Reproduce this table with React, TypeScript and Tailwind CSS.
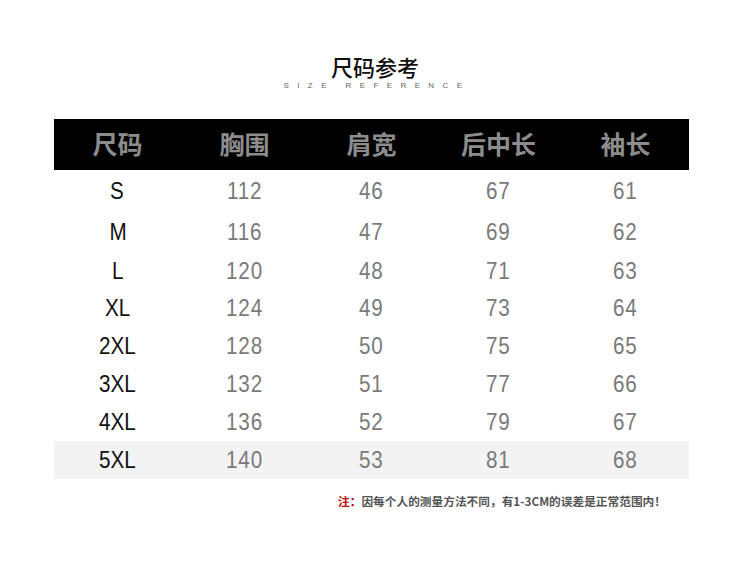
const headers = ["尺码", "胸围", "肩宽", "后中长", "袖长"];

const rows = [
  { size: "S", v: ["112", "46", "67", "61"], h: "h-[42px]" },
  { size: "M", v: ["116", "47", "69", "62"], h: "h-[40px]" },
  { size: "L", v: ["120", "48", "71", "63"], h: "h-[37px]" },
  { size: "XL", v: ["124", "49", "73", "64"], h: "h-[38px]" },
  { size: "2XL", v: ["128", "50", "75", "65"], h: "h-[38px]" },
  { size: "3XL", v: ["132", "51", "77", "66"], h: "h-[38px]" },
  { size: "4XL", v: ["136", "52", "79", "67"], h: "h-[38px]" },
  { size: "5XL", v: ["140", "53", "81", "68"], h: "h-[38px]", shade: true },
];

const cjk = "font-['Noto_Sans_CJK_SC',sans-serif]";
const num = "font-['Liberation_Sans',sans-serif]";

export default function App() {
  return (
    <div className="w-[750px] h-[562px] bg-white flex flex-col">
      <div className="flex flex-col items-center pt-[52px]">
        <h1 className={`${cjk} text-[22px] leading-[28px] text-[#111] font-medium`}>尺码参考</h1>
        <p className="font-['Liberation_Sans',sans-serif] text-[8px] leading-[10px] tracking-[8.4px] text-[#666] mt-[1px] pl-[4px]">
          SIZE REFERENCE
        </p>
      </div>

      <div className="mx-[54px] mt-[28px] w-[635px]">
        <div className="grid grid-cols-5 h-[51px] bg-black items-center pb-[3px]">
          {headers.map((t) => (
            <div key={t} className={`${cjk} text-center text-[25px] font-bold text-[#8c8c8c] leading-none`}>
              {t}
            </div>
          ))}
        </div>
        {rows.map((r) => (
          <div
            key={r.size}
            className={`grid grid-cols-5 items-center ${r.h} ${r.shade ? "bg-[#f3f3f3]" : ""}`}
          >
            <div className="text-center leading-none">
              <span className={`${num} inline-block scale-x-[0.86] text-[24px] text-[#111]`}>{r.size}</span>
            </div>
            {r.v.map((x, i) => (
              <div key={i} className="text-center leading-none">
                <span className={`${num} inline-block scale-x-[0.86] text-[24px] text-[#7a7a7a] tracking-[1px]`}>
                  {x}
                </span>
              </div>
            ))}
          </div>
        ))}
      </div>

      <div className="flex justify-end pr-[84px] mt-[15px]">
        <p className={`${cjk} text-[11.7px] leading-[14px] font-bold text-[#555]`}>
          <span className="text-[#c00000]">注：</span>因每个人的测量方法不同，有1-3CM的误差是正常范围内！
        </p>
      </div>
    </div>
  );
}
